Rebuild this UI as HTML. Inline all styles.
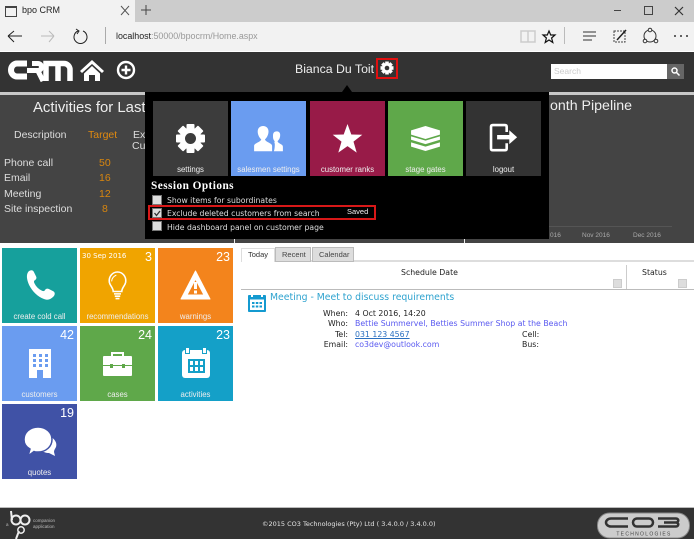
<!DOCTYPE html>
<html><head><meta charset="utf-8">
<style>
html,body{margin:0;padding:0;background:#fff}
#p{position:relative;width:694px;height:539px;overflow:hidden;background:#fff;font-family:"Liberation Sans",sans-serif}
.a{position:absolute}
.t{position:absolute;white-space:nowrap;line-height:1}
.v{font-family:"DejaVu Sans",sans-serif}
.tile{position:absolute;width:75px;height:75px;color:#fff}
.tile .l{position:absolute;left:0;right:0;bottom:2px;text-align:center;font-size:7.8px;line-height:9px;color:#eee}
.tile .n{position:absolute;right:3px;top:3px;font-size:12.5px;line-height:13px;color:#fff}
.tile svg{position:absolute;left:0;top:0}
.ck{position:absolute;left:152px;width:8px;height:8px;background:#ddd;border:1px solid #777}
</style></head><body><div id="p">

<!-- browser chrome -->
<div class="a" style="left:0;top:0;width:694px;height:22px;background:#ccc"></div>
<div class="a" style="left:0;top:0;width:135px;height:22px;background:#f2f2f2"></div>
<div class="a" style="left:0;top:22px;width:694px;height:29px;background:#f2f2f2"></div>
<div class="a" style="left:5px;top:6px;width:10px;height:8px;border:1px solid #444;border-top-width:2px"></div>
<div class="t" style="left:22px;top:6px;font-size:9px;color:#222">bpo CRM</div>
<svg class="a" style="left:0;top:0" width="694" height="52" fill="none" stroke="#333" stroke-width="1">
<path d="M121 6l8 9M129 6l-8 9" stroke="#555"/>
<path d="M146 5v10M141 10h10" stroke="#444"/>
<path d="M8 36h14M8 36l6-5M8 36l6 6" stroke="#222"/>
<path d="M41 36h13M54 36l-5-5M54 36l-5 6" stroke="#bbb"/>
<path d="M78 31a6.500 6.500 0 1 0 5 0M76 29l3 2-2 3" stroke="#222"/>
<path d="M105.500 27v17" stroke="#aaa"/>
<path d="M521 31h7v11h-7zM528 31h7v11h-7z" stroke="#ccc" stroke-width="1.500"/>
<path d="M549 31l1.700 4h4.300l-3.400 3 1.200 4.500-3.800-2.500-3.800 2.500 1.200-4.500-3.400-3h4.300z" stroke="#111" stroke-width="1.200"/>
<path d="M564.500 27v17" stroke="#bbb"/>
<path d="M583 32h13M583 36h13M583 40h9" stroke="#333"/>
<path d="M614 31h11v11h-11z" stroke="#444" stroke-dasharray="2 1"/>
<path d="M617 40l9-10" stroke="#222" stroke-width="1.500"/>
<circle cx="650" cy="36" r="6" stroke="#333"/><circle cx="650" cy="30" r="1.800" fill="#f2f2f2"/><circle cx="645" cy="41" r="1.800" fill="#f2f2f2"/><circle cx="656" cy="41" r="1.800" fill="#f2f2f2"/>
<path d="M674 36h2M680 36h2M686 36h2" stroke="#333" stroke-width="1.500"/>
<path d="M614 10.500h7" stroke="#444"/>
<path d="M644.500 6.500h8v8h-8z" stroke="#444"/>
<path d="M675 7l8 8M683 7l-8 8" stroke="#333" stroke-width="1.200"/>
</svg>
<div class="t" style="left:116px;top:32px;font-size:8.900px;color:#999"><span style="color:#222">localhost</span>:50000/bpocrm/Home.aspx</div>

<!-- app header -->
<div class="a" style="left:0;top:52px;width:694px;height:40px;background:#333"></div>
<div class="a" style="left:0;top:92px;width:694px;height:3px;background:#c8c8c8"></div>
<div class="a" style="left:0;top:95px;width:694px;height:148px;background:#444"></div>

<svg class="a" style="left:8px;top:59px" width="66" height="24" fill="none" stroke="#fff" stroke-width="6">
<path d="M19 4.500H9a6 6.500 0 0 0 0 13H19"/>
<path d="M19 11.500h11a3 3 0 0 0 0-7H24M30 12l5 10" stroke-width="5"/>
<path d="M38 22V4.500h18a6 6 0 0 1 6 6V22M50 6v16" stroke-width="5.500"/>
</svg>
<svg class="a" style="left:80px;top:59px" width="24" height="22" fill="#fff">
<path d="M12 1L0 12l2 2L12 5l10 9 2-2z"/><path d="M4 14.500L12 7l8 7.500V22h-5v-6H9v6H4z"/>
</svg>
<svg class="a" style="left:116px;top:60px" width="20" height="20" fill="none" stroke="#fff">
<circle cx="10" cy="10" r="8" stroke-width="2.400"/><path d="M10 5.500v9M5.500 10h9" stroke-width="2.400"/>
</svg>
<div class="t" style="left:295px;top:63px;font-size:12.300px;color:#eee">Bianca Du Toit</div>
<div class="a" style="left:376px;top:58px;width:18px;height:17px;border:2px solid #e01010"></div>
<svg class="a" style="left:379px;top:60px" width="16" height="16"><g transform="translate(8 8)"><g fill="#fff"><circle r="5"/><rect x="-1.800" y="-6.500" width="3.600" height="13"/><rect x="-1.800" y="-6.500" width="3.600" height="13" transform="rotate(45)"/><rect x="-1.800" y="-6.500" width="3.600" height="13" transform="rotate(90)"/><rect x="-1.800" y="-6.500" width="3.600" height="13" transform="rotate(135)"/></g><circle r="2.300" fill="#333"/></g></svg>
<div class="a" style="left:551px;top:64px;width:116px;height:15px;background:#fff"></div>
<div class="t" style="left:554px;top:67px;font-size:8.500px;color:#ccc">Search</div>
<div class="a" style="left:667px;top:64px;width:17px;height:15px;background:#666"></div>
<svg class="a" style="left:670px;top:66px" width="11" height="11" fill="none" stroke="#fff" stroke-width="1.500"><circle cx="4.500" cy="4.500" r="2.500"/><path d="M6.500 6.500l3 3"/></svg>

<!-- dashboard behind -->
<div class="t" style="left:33px;top:101px;font-size:14.900px;color:#eee">Activities for Last</div>
<div class="t" style="left:14px;top:130px;font-size:10.500px;color:#ddd">Description</div>
<div class="t" style="left:88px;top:130px;font-size:10.500px;color:#e08a10">Target</div>
<div class="t" style="left:133px;top:130px;font-size:10.500px;color:#ddd">Ex</div>
<div class="t" style="left:132px;top:141px;font-size:10.500px;color:#ddd">Cu</div>
<div class="t" style="left:4px;top:158px;font-size:10.500px;color:#ddd">Phone call</div>
<div class="t" style="left:4px;top:173px;font-size:10.500px;color:#ddd">Email</div>
<div class="t" style="left:4px;top:189px;font-size:10.500px;color:#ddd">Meeting</div>
<div class="t" style="left:4px;top:204px;font-size:10.500px;color:#ddd">Site inspection</div>
<div class="t" style="left:99px;top:158px;font-size:10.500px;color:#d8860f">50</div>
<div class="t" style="left:99px;top:173px;font-size:10.500px;color:#d8860f">16</div>
<div class="t" style="left:99px;top:189px;font-size:10.500px;color:#d8860f">12</div>
<div class="t" style="left:102px;top:204px;font-size:10.500px;color:#d8860f">8</div>
<div class="t" style="left:550px;top:99px;font-size:14.200px;color:#eee">onth Pipeline</div>
<div class="a" style="left:549px;top:226px;width:123px;height:1px;background:#555"></div>
<div class="t" style="left:550px;top:233px;font-size:6.500px;color:#aaa">016</div>
<div class="t" style="left:582px;top:233px;font-size:6.500px;color:#aaa">Nov 2016</div>
<div class="t" style="left:633px;top:233px;font-size:6.500px;color:#aaa">Dec 2016</div>

<!-- popup -->
<div class="a" style="left:145px;top:92px;width:404px;height:147px;background:#000"></div>
<div class="a" style="left:342px;top:85px;width:0;height:0;border-left:5px solid transparent;border-right:5px solid transparent;border-bottom:7px solid #000"></div>
<div class="a" style="left:234px;top:239px;width:1px;height:4px;background:#eee"></div>
<div class="a" style="left:464px;top:239px;width:1px;height:4px;background:#eee"></div>

<div class="tile" style="left:153px;top:101px;background:#3c3c3c"><svg width="75" height="75"><g transform="translate(37.500 37.500)"><g fill="#fff"><circle r="11"/><rect x="-4" y="-14.500" width="8" height="29" rx="1"/><rect x="-4" y="-14.500" width="8" height="29" rx="1" transform="rotate(45)"/><rect x="-4" y="-14.500" width="8" height="29" rx="1" transform="rotate(90)"/><rect x="-4" y="-14.500" width="8" height="29" rx="1" transform="rotate(135)"/></g><circle r="5.500" fill="#3c3c3c"/></g></svg><div class="l">settings</div></div>
<div class="tile" style="left:231px;top:101px;background:#6a9cf0"><svg width="75" height="75" fill="#fff"><g transform="translate(1.500 7) scale(.9)"><path d="M24 48v-6c0-3 7-4 8-7-3-3-4-6-4-9 0-4 3-6 6-6s6 2 6 6c0 3-1 6-4 9 1 3 8 4 8 7v6z"/><path d="M46 48h10v-5c0-3-5-3-6-6 2-2 3-4 3-7 0-3-2-4-4-4-3 0-4 2-4 5 0 2 0 4 2 6-1 1 0 2 0 3 0 2 0 5-1 8z"/></g></svg><div class="l">salesmen settings</div></div>
<div class="tile" style="left:310px;top:101px;background:#981b48"><svg width="75" height="75" fill="#fff"><path d="M37.500 23l3.800 10.500 11 .3-8.800 6.800 3.200 11-9.200-6.500-9.200 6.500 3.200-11-8.800-6.800 11-.3z"/></svg><div class="l">customer ranks</div></div>
<div class="tile" style="left:388px;top:101px;background:#5fa84a"><svg width="75" height="75" fill="#fff"><g transform="translate(9 4.400) scale(.76 .86)"><path d="M37.500 24l19 5v5l-19 5-19-5v-5z"/><path d="M18.500 36l19 5 19-5v4l-19 5-19-5z"/><path d="M18.500 43l19 5 19-5v5l-19 5-19-5z"/></g></svg><div class="l">stage gates</div></div>
<div class="tile" style="left:466px;top:101px;background:#333"><svg width="75" height="75" fill="none" stroke="#fff" stroke-width="3"><g transform="translate(2.400 4) scale(.87)"><path d="M44 31v-6c0-1.500-1-2-2-2H28c-1.500 0-2 1-2 2v25c0 1 .5 2 2 2h14c1 0 2-.5 2-2v-6"/><path d="M33 34.500h14V29l9 8-9 8v-5.500H33z" fill="#fff" stroke="none"/></g></svg><div class="l">logout</div></div>

<div class="t" style="left:151px;top:181px;font-size:11.300px;font-weight:bold;color:#fff;font-family:'Liberation Serif',serif;letter-spacing:.45px">Session Options</div>
<div class="ck" style="top:195px"></div>
<div class="ck" style="top:208px"></div>
<svg class="a" style="left:153px;top:209px" width="9" height="9" fill="none" stroke="#333" stroke-width="1.300"><path d="M1.500 4l2 2.500 3.500-4.500"/></svg>
<div class="ck" style="top:221px"></div>
<div class="t v" style="left:167px;top:197px;font-size:7.700px;color:#ddd">Show items for subordinates</div>
<div class="t v" style="left:167px;top:210px;font-size:7.700px;color:#ddd">Exclude deleted customers from search</div>
<div class="t v" style="left:167px;top:224px;font-size:7.700px;color:#ddd">Hide dashboard panel on customer page</div>
<div class="t" style="left:347px;top:208px;font-size:7.500px;color:#eee">Saved</div>
<div class="a" style="left:148px;top:205px;width:224px;height:11px;border:2px solid #d81818"></div>

<!-- tiles -->
<div class="tile" style="left:2px;top:248px;background:#16a09c"><svg width="75" height="75" fill="#fff"><g transform="translate(7.600 10.500) scale(.78)"><path d="M24 17c3-3 6-2 7 0l3 6c1 2 0 4-2 5-1 1-1 2 0 4 2 4 5 7 9 9 2 1 3 1 4 0 1-2 3-3 5-2l6 3c2 1 3 4 0 7-3 3-7 5-12 3-8-3-15-10-19-18-3-7-4-13-1-17z"/></g></svg><div class="l">create cold call</div></div>
<div class="tile" style="left:80px;top:248px;background:#f0a400"><svg width="75" height="75" fill="none" stroke="#fff" stroke-width="2"><g transform="translate(8.250 9.200) scale(.78)"><path d="M32 44c0-5-4-7-5-12-1-7 4-13 10.500-13S49 25 48 32c-1 5-5 7-5 12z"/><path d="M33 47h9M34 50h7M35 53h5"/><path d="M30 31c0-4 3-7 6-8" stroke-width="1.300"/></g></svg><div class="t" style="left:2px;top:5px;font-size:7px;color:#fff;font-family:'DejaVu Sans',sans-serif">30 Sep 2016</div><div class="n">3</div><div class="l">recommendations</div></div>
<div class="tile" style="left:158px;top:248px;background:#f3841c"><svg width="75" height="75" fill="#fff"><path d="M37.500 23L52 51H23zM37.500 31L29 47h17z" fill-rule="evenodd" stroke="#fff" stroke-linejoin="round"/><rect x="36" y="34" width="3" height="7"/><rect x="36" y="42.500" width="3" height="3"/></svg><div class="n">23</div><div class="l">warnings</div></div>
<div class="tile" style="left:2px;top:326px;background:#6a9cf0"><svg width="75" height="75" fill="#fff"><g transform="translate(0 2)"><path d="M27 21h22v29H41v-8h-6v8h-8z"/><g fill="#6a9cf0"><rect x="31" y="26" width="3" height="3"/><rect x="37" y="26" width="3" height="3"/><rect x="43" y="26" width="3" height="3"/><rect x="31" y="31" width="3" height="3"/><rect x="37" y="31" width="3" height="3"/><rect x="43" y="31" width="3" height="3"/><rect x="31" y="36" width="3" height="3"/><rect x="37" y="36" width="3" height="3"/><rect x="43" y="36" width="3" height="3"/></g></g></svg><div class="n">42</div><div class="l">customers</div></div>
<div class="tile" style="left:80px;top:326px;background:#5fa84a"><svg width="75" height="75" fill="#fff"><path d="M32 30v-3h11v3" fill="none" stroke="#fff" stroke-width="2"/><rect x="23" y="30" width="29" height="20" rx="1"/><rect x="23" y="39" width="29" height="1" fill="#5fa84a"/><rect x="30" y="38" width="3" height="4" fill="#5fa84a"/><rect x="42" y="38" width="3" height="4" fill="#5fa84a"/></svg><div class="n">24</div><div class="l">cases</div></div>
<div class="tile" style="left:158px;top:326px;background:#14a0c8"><svg width="75" height="75" fill="#fff"><rect x="24" y="24" width="28" height="28" rx="3"/><rect x="27" y="21" width="5" height="7" fill="#14a0c8"/><rect x="44" y="21" width="5" height="7" fill="#14a0c8"/><rect x="28" y="22" width="3" height="5"/><rect x="45" y="22" width="3" height="5"/><rect x="30" y="33" width="17" height="14" fill="#14a0c8"/><g fill="#fff"><rect x="32" y="35" width="3" height="4"/><rect x="37" y="35" width="3" height="4"/><rect x="42" y="35" width="3" height="4"/><rect x="32" y="41" width="3" height="4"/><rect x="37" y="41" width="3" height="4"/><rect x="42" y="41" width="3" height="4"/></g></svg><div class="n">23</div><div class="l">activities</div></div>
<div class="tile" style="left:2px;top:404px;background:#4052a6"><svg width="75" height="75" fill="#fff"><path d="M49 33c5 3 6 7 5 10-1 2-2 3-2 5l1 4-6-3c-3 0-6-1-8-3 6 0 11-6 10-13z"/><g stroke="#4052a6" stroke-width="1.500"><path d="M36 23c8 0 14 5.500 14 12.500S44 48 36 48c-1.500 0-3 0-4-.5L26 52l2-7c-4-2-6-5.500-6-9.500C22 28.500 28 23 36 23z"/></g></svg><div class="n">19</div><div class="l">quotes</div></div>

<!-- right panel -->
<div class="a" style="left:241px;top:260px;width:453px;height:2px;background:#ddd"></div>
<div class="a" style="left:241px;top:248px;width:32px;height:13px;background:#fff;border:1px solid #ddd;border-bottom:none"></div>
<div class="a" style="left:275px;top:247px;width:34px;height:13px;background:#ddd;border:1px solid #bbb"></div>
<div class="a" style="left:312px;top:247px;width:40px;height:13px;background:#ddd;border:1px solid #bbb"></div>
<div class="t" style="left:248px;top:251px;font-size:7.500px;color:#333">Today</div>
<div class="t" style="left:282px;top:251px;font-size:7.500px;color:#444">Recent</div>
<div class="t" style="left:319px;top:251px;font-size:7.500px;color:#444">Calendar</div>
<div class="t v" style="left:401px;top:269px;font-size:7.800px;color:#222">Schedule Date</div>
<div class="t v" style="left:642px;top:269px;font-size:7.800px;color:#222">Status</div>
<div class="a" style="left:626px;top:265px;width:1px;height:24px;background:#ccc"></div>
<div class="a" style="left:241px;top:289px;width:453px;height:1px;background:#bbb"></div>
<div class="a" style="left:613px;top:279px;width:7px;height:7px;background:#ddd;border:1px solid #ccc"></div>
<div class="a" style="left:678px;top:279px;width:7px;height:7px;background:#ddd;border:1px solid #ccc"></div>
<svg class="a" style="left:247px;top:293px" width="20" height="20"><path d="M2 2h2v2h2V2h8v2h2V2h2c1 0 1 1 1 1v15c0 1-1 1-1 1H2c-1 0-1-1-1-1V3s0-1 1-1z" fill="#149ad0"/><rect x="3" y="6.500" width="14" height="10.500" fill="#fff"/><g fill="#149ad0"><rect x="5" y="9" width="2.500" height="2"/><rect x="8.800" y="9" width="2.500" height="2"/><rect x="12.500" y="9" width="2.500" height="2"/><rect x="5" y="12.500" width="2.500" height="2"/><rect x="8.800" y="12.500" width="2.500" height="2"/><rect x="12.500" y="12.500" width="2.500" height="2"/></g></svg>
<div class="t v" style="left:270px;top:293px;font-size:9.300px;color:#2fa3cf">Meeting - Meet to discuss requirements</div>
<div class="t v" style="left:310px;top:310px;width:38px;text-align:right;font-size:7.800px;color:#222">When:</div>
<div class="t v" style="left:310px;top:320px;width:38px;text-align:right;font-size:7.800px;color:#222">Who:</div>
<div class="t v" style="left:310px;top:331px;width:38px;text-align:right;font-size:7.800px;color:#222">Tel:</div>
<div class="t v" style="left:310px;top:341px;width:38px;text-align:right;font-size:7.800px;color:#222">Email:</div>
<div class="t v" style="left:355px;top:310px;font-size:7.800px;color:#222">4 Oct 2016, 14:20</div>
<div class="t v" style="left:355px;top:320px;font-size:7.800px;color:#5a5af0">Bettie Summervel, Betties Summer Shop at the Beach</div>
<div class="t v" style="left:355px;top:331px;font-size:7.800px;color:#2a6fc0;text-decoration:underline">031 123 4567</div>
<div class="t v" style="left:355px;top:341px;font-size:7.800px;color:#5a5af0">co3dev@outlook.com</div>
<div class="t v" style="left:522px;top:331px;font-size:7.800px;color:#222">Cell:</div>
<div class="t v" style="left:522px;top:341px;font-size:7.800px;color:#222">Bus:</div>

<!-- footer -->
<div class="a" style="left:0;top:507px;width:694px;height:1px;background:#bbb"></div>
<div class="a" style="left:0;top:508px;width:694px;height:31px;background:#333"></div>
<svg class="a" style="left:0;top:508px" width="80" height="31" fill="none" stroke="#eee" stroke-width="2"><circle cx="16" cy="12" r="4.500"/><circle cx="25" cy="12" r="4.500"/><path d="M11 3l1 9M19 23l-3 8"/><circle cx="21" cy="22" r="3.200" stroke-width="1.500"/></svg>
<div class="t" style="left:33px;top:518px;font-size:4.500px;line-height:6px;color:#bbb;white-space:normal;width:30px">companion<br>application</div>
<div class="t" style="left:6px;top:523px;font-size:4.500px;color:#bbb">a</div>
<div class="t v" style="left:262px;top:521px;font-size:6.500px;color:#e4e4e4">©2015 CO3 Technologies (Pty) Ltd ( 3.4.0.0 / 3.4.0.0)</div>
<svg class="a" style="left:596px;top:510px" width="96" height="29"><rect x="1.500" y="3" width="92" height="25" rx="12" fill="#ccc" stroke="#888"/><g fill="none" stroke="#333" stroke-width="2.500"><path d="M32 8.500H15c-3 0-5 2-5 4s2 4 5 4h17"/><rect x="37" y="8.500" width="20" height="8" rx="4"/><path d="M62 8.500h18c3 0 3 4 0 4h-12 12c3 0 3 4 0 4H62"/></g><text x="48" y="25.500" text-anchor="middle" font-family="Liberation Sans" font-size="5" letter-spacing="1.300" fill="#444">TECHNOLOGIES</text></svg>

</div></body></html>
